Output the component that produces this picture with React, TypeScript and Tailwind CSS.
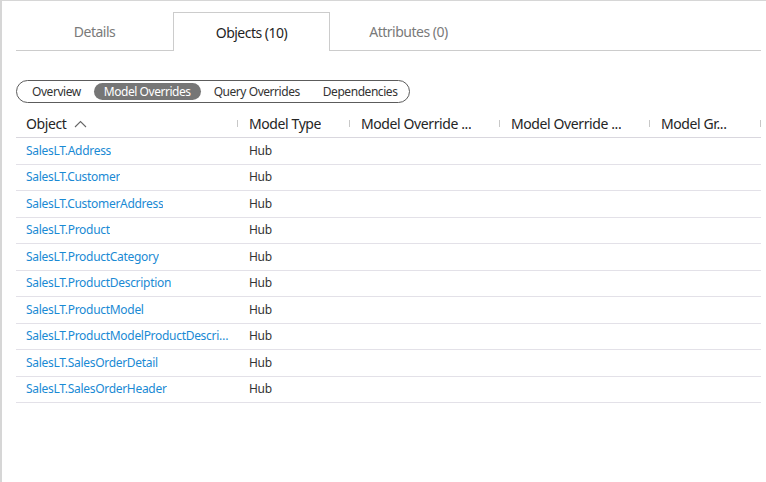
import { ReactNode } from "react";

const FONT = { fontFamily: '"Segoe UI", "Noto Sans", "Liberation Sans", sans-serif' };

const TABS = [
  { label: "Details", active: false },
  { label: "Objects (10)", active: true },
  { label: "Attributes (0)", active: false },
];

const SEGMENTS = ["Overview", "Model Overrides", "Query Overrides", "Dependencies"];

const COLUMNS = ["Model Type", "Model Override ...", "Model Override ...", "Model Gr..."];

const OBJECTS = [
  "SalesLT.Address",
  "SalesLT.Customer",
  "SalesLT.CustomerAddress",
  "SalesLT.Product",
  "SalesLT.ProductCategory",
  "SalesLT.ProductDescription",
  "SalesLT.ProductModel",
  "SalesLT.ProductModelProductDescription",
  "SalesLT.SalesOrderDetail",
  "SalesLT.SalesOrderHeader",
];

const GRID = "grid grid-cols-[222px_112px_150px_150px_111px]";

function HeaderCell({ children, first }: { children: ReactNode; first?: boolean }) {
  return (
    <div className="relative flex h-full items-center overflow-hidden">
      <div className={`flex items-center truncate ${first ? "pl-[10px]" : "pl-[11px]"}`}>{children}</div>
      <span className="absolute right-0 top-[10px] h-[7px] w-px bg-[#c8c8c8]" />
    </div>
  );
}

export default function App() {
  return (
    <div
      className="h-[482px] w-[766px] overflow-hidden border-l-2 border-t border-[#d6d6d6] bg-white"
      style={FONT}
    >
      <div className="ml-[14px] mr-[5px] pt-[11px]">
        <div className="flex border-b border-[#cccccc]">
          {TABS.map((tab) => (
            <div
              key={tab.label}
              className={`-mb-px flex h-[39px] w-[157px] items-center justify-center text-[14px] tracking-[-0.5px] ${
                tab.active
                  ? "border border-b-0 border-[#cccccc] bg-white text-[#1f1f1f]"
                  : "text-[#7a7a7a]"
              }`}
            >
              {tab.label}
            </div>
          ))}
        </div>

        <div className="mt-[29px] inline-flex h-[23px] items-center gap-[3px] rounded-full border border-[#5c5c5c] pl-[5px] pr-[2px] text-[12px] tracking-[-0.45px]">
          {SEGMENTS.map((s) => (
            <div
              key={s}
              className={`flex h-[17px] items-center rounded-full px-[10px] ${
                s === "Model Overrides" ? "bg-[#767676] text-white" : "text-[#333333]"
              }`}
            >
              {s}
            </div>
          ))}
        </div>

        <div className="mt-[7px] w-[745px]">
          <div className={`${GRID} h-[28px] border-b border-[#d9d7de] text-[14px] tracking-[-0.4px] text-[#252525]`}>
            <HeaderCell first>
              <span>Object</span>
              <svg width="13" height="8" viewBox="0 0 13 8" className="ml-[8px]">
                <path d="M1 7 L6.5 1.5 L12 7" fill="none" stroke="#666" strokeWidth="1.1" />
              </svg>
            </HeaderCell>
            {COLUMNS.map((c, i) => (
              <HeaderCell key={i}>{c}</HeaderCell>
            ))}
          </div>
          {OBJECTS.map((o) => (
            <div key={o} className={`${GRID} h-[26.5px] border-b border-[#e3e1e8] text-[12px] tracking-[-0.3px]`}>
              <div className="flex min-w-0 items-center pl-[10px] pr-[8px]">
                <span className="block min-w-0 truncate text-[#1a8ad4]">{o}</span>
              </div>
              <div className="flex items-center pl-[11px] text-[#333333]">Hub</div>
              <div />
              <div />
              <div />
            </div>
          ))}
        </div>
      </div>
    </div>
  );
}
